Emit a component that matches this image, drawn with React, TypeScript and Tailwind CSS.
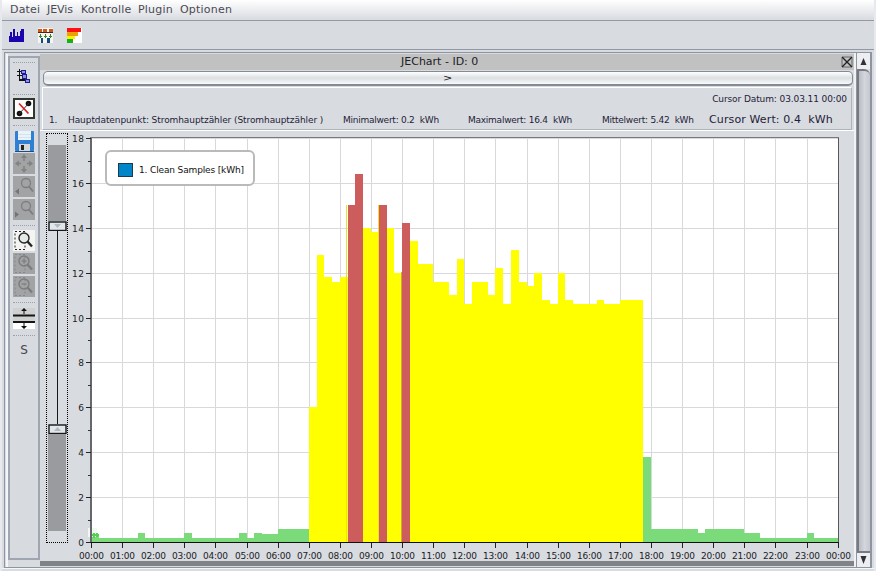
import type { ReactNode } from 'react';

const font = "font-['DejaVu_Sans','Noto_Sans',sans-serif]";

// Quarter-hour consumption values, run-length encoded: [count, kWh, colour]
const GREEN = '#7bdb7b';
const YELLOW = '#ffff00';
const RED = '#cd5c5c';
const runs: [number, number, string][] = [
  [1, 0.35, GREEN], [5, 0.2, GREEN], [1, 0.4, GREEN], [5, 0.2, GREEN], [1, 0.4, GREEN], [6, 0.2, GREEN],
  [1, 0.4, GREEN], [1, 0.2, GREEN], [1, 0.4, GREEN], [2, 0.35, GREEN], [4, 0.6, GREEN],
  [1, 6, YELLOW], [1, 12.8, YELLOW], [1, 11.8, YELLOW], [1, 11.6, YELLOW], [1, 11.8, YELLOW],
  [1, 15, RED], [1, 16.4, RED], [1, 14, YELLOW], [1, 13.8, YELLOW], [1, 15, RED], [1, 14, YELLOW],
  [1, 12, YELLOW], [1, 14.2, RED], [1, 13.4, YELLOW], [2, 12.4, YELLOW], [2, 11.6, YELLOW],
  [1, 11, YELLOW], [1, 12.6, YELLOW], [1, 10.6, YELLOW], [2, 11.6, YELLOW], [1, 11, YELLOW],
  [1, 12.2, YELLOW], [1, 10.6, YELLOW], [1, 13, YELLOW], [1, 11.6, YELLOW], [1, 11.4, YELLOW],
  [1, 12, YELLOW], [1, 10.8, YELLOW], [1, 10.6, YELLOW], [1, 12, YELLOW], [1, 10.8, YELLOW],
  [3, 10.6, YELLOW], [1, 10.8, YELLOW], [2, 10.6, YELLOW], [3, 10.8, YELLOW],
  [1, 3.8, GREEN], [6, 0.6, GREEN], [1, 0.4, GREEN], [5, 0.6, GREEN], [2, 0.4, GREEN],
  [6, 0.2, GREEN], [1, 0.4, GREEN], [3, 0.2, GREEN],
];

const LEFT = 23;
const TOP = 7;
const BOTTOM = 411;
const HOUR = 31.11;
const UNIT = (BOTTOM - TOP) / 18;

function Chart() {
  let slot = 0;
  const bars = runs.map(([n, v, c]) => {
    const x = Math.round(LEFT + (slot * HOUR) / 4);
    slot += n;
    const x2 = Math.round(LEFT + (slot * HOUR) / 4);
    return { x, w: x2 - x, y: Math.round(BOTTOM - v * UNIT), c };
  });
  const hours = Array.from({ length: 25 }, (_, i) => i);
  const steps = Array.from({ length: 10 }, (_, i) => i * 2);
  return (
    <svg width="788" height="430" viewBox="0 0 788 430" className={`block shrink-0 ${font}`} shapeRendering="crispEdges">
      <rect x={LEFT} y={TOP} width="747" height="404" fill="#fff" />
      {hours.map((h) => (
        <rect key={h} x={Math.round(LEFT + h * HOUR)} y={TOP} width="1" height="404" fill="#d8d8dd" />
      ))}
      {steps.map((v) => (
        <rect key={v} x={LEFT} y={Math.round(BOTTOM - v * UNIT)} width="747" height="1" fill="#d8d8dd" />
      ))}
      {bars.map((b, i) => (
        <rect key={i} x={b.x} y={b.y} width={b.w} height={BOTTOM - b.y} fill={b.c} />
      ))}
      <rect x="278" y="74" width="1" height="337" fill="#f0e020" />
      <rect x="310" y="74" width="1" height="337" fill="#f0e020" />
      <rect x="333" y="141" width="1" height="270" fill="#d6a341" />
      <rect x="20" y="397" width="9" height="9" fill="#f0f8f0" />
      <path d="M24 404h7M26 402v5M29 402v4" stroke="#55d055" strokeWidth="1.5" />
      <rect x="22" y={TOP - 1} width="749" height="1" fill="#77797d" />
      <rect x="22" y={TOP} width="2" height="405" fill="#65676b" />
      <rect x="770" y={TOP} width="1" height="405" fill="#55575b" />
      <rect x="22" y={BOTTOM} width="749" height="1" fill="#111" />
      {steps.map((v) => {
        const y = Math.round(BOTTOM - v * UNIT);
        return (
          <g key={v}>
            <rect x="18" y={y} width="5" height="1" fill="#222" />
            {v < 18 && <rect x="20" y={Math.round(y - UNIT)} width="3" height="1" fill="#333" />}
            <text x="16" y={y + 3.5} fontSize="9" textAnchor="end" textLength={v > 9 ? 12 : 6} fill="#1b1b1f">{v}</text>
          </g>
        );
      })}
      {hours.map((h) => {
        const x = Math.round(LEFT + h * HOUR);
        return (
          <g key={h}>
            <rect x={x} y="412" width="1" height="5" fill="#222" />
            <text x={x - 12} y="427.5" fontSize="9" textLength="25" fill="#1b1b1f">
              {`${String(h % 24).padStart(2, '0')}:00`}
            </text>
          </g>
        );
      })}
      <rect x="38" y="20" width="148" height="34" rx="5" fill="#fff" stroke="#bababa" strokeWidth="2" shapeRendering="auto" />
      <rect x="50.5" y="32.5" width="14" height="13" fill="#0085c8" stroke="#1d3b50" />
      <text x="71" y="41.5" fontSize="9" textLength="105" fill="#111">1. Clean Samples [kWh]</text>
    </svg>
  );
}

const Divider = ({ h }: { h: string }) => (
  <div className={`flex w-full shrink-0 items-center px-[3px] ${h}`}>
    <div className="w-full border-t border-dotted border-[#9ba0a9]" />
  </div>
);

function Tool({ children, tone }: { children?: ReactNode; tone: string }) {
  return (
    <div className={`h-[21px] w-[22px] shrink-0 ${tone}`}>
      <svg width="22" height="21" viewBox="0 0 22 21" fill="none">{children}</svg>
    </div>
  );
}

function Lens({ color, sign }: { color: string; sign?: string }) {
  return (
    <g stroke={color}>
      <circle cx="11" cy="8" r="5" strokeWidth="1.4" />
      <path d="M14.5 11.5l4.5 5" strokeWidth="2.4" />
      {sign && <path d={sign} strokeWidth="1.2" />}
    </g>
  );
}

function Sidebar() {
  const gray = 'bg-[#a2a3a5]';
  return (
    <div className="flex h-[504px] w-[32px] shrink-0 flex-col items-center border-2 border-[#a0a6b1] bg-[#d7dadf]">
      <Divider h="h-[8px]" />
      <svg className="mt-[3px] shrink-0" width="14" height="15" viewBox="0 0 14 15" shapeRendering="crispEdges">
        <path d="M2.500 0v11h6M0 2.500h5M0 6.500h7M5.500 4v3" stroke="#111" fill="none" strokeWidth="1.3" />
        <path d="M4.500 1.500h4v3h-4zM5.500 5.500h4v4h-4zM8.500 10.500h4v3h-4z" fill="#8f93dc" stroke="#1c1c90" strokeWidth="1.3" />
      </svg>
      <Divider h="h-[20px]" />
      <div className="-mt-[6px] shrink-0">
        <Tool tone="bg-white">
          <rect x="1" y="1" width="20" height="19" stroke="#33352f" strokeWidth="2" />
          <circle cx="15.500" cy="5.500" r="2.800" fill="#111" />
          <circle cx="6.500" cy="15.500" r="2.800" fill="#111" />
          <path d="M6 16L16 5" stroke="#333" />
          <path d="M6 5.500l9.500 10" stroke="#e02020" strokeWidth="1.800" />
        </Tool>
      </div>
      <Divider h="h-[12px]" />
      <Tool tone="bg-[#d7dadf]">
        <rect x="2" y="0" width="19" height="20" rx="1" fill="#2f80d4" />
        <rect x="5" y="0" width="13" height="9" fill="#eaf2fa" />
        <path d="M5 3.500h13M5 6.500h13" stroke="#d5e3f1" />
        <rect x="6" y="13" width="11" height="7" fill="#d6d6d6" />
        <rect x="8" y="14" width="3" height="5" fill="#222" />
        <path d="M2 20.500h19" stroke="#174e8c" />
      </Tool>
      <div className="mt-px flex shrink-0 flex-col gap-[2px]">
        <Tool tone={gray}>
          <path d="M11 3v5M11 13v5M3 10.500h5M14 10.500h5" stroke="#808284" strokeWidth="1.500" />
          <path d="M11 1l3 4H8zM11 20l3-4H8zM2 10.500l4-3v6zM20 10.500l-4-3v6z" fill="#808284" />
        </Tool>
        <Tool tone={gray}>
          <circle cx="13" cy="7" r="4.500" stroke="#7c7e80" strokeWidth="1.300" />
          <path d="M16 10.500l4 5" stroke="#7c7e80" strokeWidth="2" />
          <path d="M2 15.500l4-3v6z" fill="#727476" />
        </Tool>
        <Tool tone={gray}>
          <circle cx="13" cy="7" r="4.500" stroke="#7c7e80" strokeWidth="1.300" />
          <path d="M16 10.500l4 5" stroke="#7c7e80" strokeWidth="2" />
          <path d="M6 15.500l-4-3v6z" fill="#727476" />
        </Tool>
      </div>
      <Divider h="h-[10px]" />
      <div className="flex shrink-0 flex-col gap-[2px]">
        <Tool tone="bg-[#f4f4f2]">
          <path d="M2 1.500h10v18H2z" stroke="#222" strokeDasharray="2 2" />
          <circle cx="10.500" cy="8.500" r="4.800" fill="#e5e9e8" />
          <Lens color="#252825" />
        </Tool>
        <Tool tone={gray}>
          <path d="M2 1.500h10v18H2z" stroke="#858789" strokeDasharray="2 2" />
          <Lens color="#7a7c7e" sign="M8.500 8h5M11 5.500v5" />
        </Tool>
        <Tool tone={gray}>
          <path d="M2 1.500h10v18H2z" stroke="#858789" strokeDasharray="2 2" />
          <Lens color="#7a7c7e" sign="M8.500 8h5" />
        </Tool>
      </div>
      <Divider h="h-[11px]" />
      <Tool tone="bg-[#cfd0d0]">
        <rect y="15" width="22" height="6" fill="#fff" />
        <path d="M0 7.500h22M0 14h22" stroke="#151515" strokeWidth="2" />
        <path d="M11 1v5M11 15v5" stroke="#111" />
        <path d="M11 0l3 3H8zM11 21l3-3H8z" fill="#111" />
      </Tool>
      <Divider h="h-[12px]" />
      <div className="mt-px text-[12px] leading-[16px] text-[#45474f]">S</div>
    </div>
  );
}

const Handle = ({ up }: { up: boolean }) => (
  <svg className="block shrink-0" width="19" height="10" viewBox="0 0 19 10">
    <rect x="1" y="1" width="17" height="8.500" fill="#e3e6e9" stroke="#15171a" strokeWidth="1.400" />
    <path d={up ? 'M9.500 3l3.500 4H6z' : 'M9.500 7L6 3h7z'} fill="#aeb9c5" />
  </svg>
);

function RangeSlider() {
  return (
    <div className="mt-[2px] flex h-[410px] w-[22px] shrink-0 flex-col items-center border border-dotted border-black">
      <div className="mt-[11px] h-[76px] w-[18px] shrink-0 bg-[#999b9f]" />
      <Handle up={false} />
      <div className="h-[193px] w-px shrink-0 bg-[#16181b]" />
      <Handle up />
      <div className="h-[97px] w-[18px] shrink-0 bg-[#999b9f]" />
    </div>
  );
}

function InfoPanel() {
  return (
    <div className="ml-[2px] mr-[2px] mt-px flex h-[43px] shrink-0 flex-col border border-[#aeb3bc] border-l-white border-t-white text-[9px] leading-[12px] text-[#251c38]">
      <div className="mr-[4px] mt-[5px] self-end whitespace-pre tracking-[-0.1px]">Cursor Datum: 03.03.11 00:00</div>
      <div className="ml-[6px] mt-[9px] flex items-center whitespace-pre tracking-[-0.25px]">
        <span className="w-[19px] shrink-0">1.</span>
        <span className="w-[275px] shrink-0 tracking-[-0.08px]">Hauptdatenpunkt: Stromhauptzähler (Stromhauptzähler )</span>
        <span className="w-[125px] shrink-0">Minimalwert: 0.2  kWh</span>
        <span className="w-[134px] shrink-0">Maximalwert: 16.4  kWh</span>
        <span className="w-[107px] shrink-0">Mittelwert: 5.42  kWh</span>
        <span className="shrink-0 text-[11px] leading-[12px] tracking-[0.12px]">Cursor Wert: 0.4  kWh</span>
      </div>
    </div>
  );
}

function Scrollbar() {
  return (
    <div className="flex h-[514px] w-[15px] shrink-0 flex-col border-x border-[#8f95a0] bg-[#d9dce1]">
      <div className="flex h-[16px] shrink-0 items-center justify-center bg-[#eceef1]">
        <svg width="7" height="7" viewBox="0 0 7 7"><path d="M3.500 0L6.500 7h-6z" fill="#303237" /></svg>
      </div>
      <div className="flex-1 rounded-tr-[6px] border-l-2 border-t-2 border-[#777a80] bg-linear-to-r from-[#b9bcc3] via-[#d3d6dc] to-[#c4c7cd]" />
      <div className="flex h-[16px] shrink-0 items-center justify-center border-t-2 border-[#777a80] bg-[#eceef1]">
        <svg width="7" height="8" viewBox="0 0 7 8"><path d="M0.500 0h6L3.500 8z" fill="#303237" /></svg>
      </div>
    </div>
  );
}

export default function App() {
  return (
    <div className={`flex h-[571px] w-[876px] flex-col overflow-hidden border-l-2 border-r-2 border-[#e7e9ef] bg-[#d8dbe0] ${font}`}>
      <div className="flex h-[21px] shrink-0 items-center border-b border-[#949aa5] bg-linear-to-b from-white to-[#d9dbe0] pl-[8px] text-[11px] leading-[18px] tracking-[0.2px] text-[#4a4a52]">
        <span className="w-[37px]">Datei</span>
        <span className="w-[34px] tracking-[-0.1px]">JEVis</span>
        <span className="w-[57px]">Kontrolle</span>
        <span className="w-[42px]">Plugin</span>
        <span>Optionen</span>
      </div>
      <div className="flex h-[29px] shrink-0 items-center gap-[14px] border-b border-[#9399a4] pl-[7px]">
        <svg width="15" height="15" viewBox="0 0 15 15" shapeRendering="crispEdges">
          <path d="M0 14V8h1V4h2v5h1V1h2v7h2V4h1v4h2V3h1V1h3v13z" fill="#1b03b0" />
        </svg>
        <svg width="15" height="15" viewBox="0 0 15 15" shapeRendering="crispEdges">
          <rect width="15" height="15" fill="#f6f4ef" />
          <path d="M0 1h4v3H0zM5 1h4v3H5zM11 1h4v3h-4z" fill="#c85a1e" />
          <path d="M0 4.500h15" stroke="#4e2518" />
          <path d="M1 8h3M6 8h3M11 8h3M2.500 6v4M7.500 6v4M12.500 6v4" stroke="#35852f" />
          <path d="M3 10h2v5H3zM9 10h3v5H9z" fill="#174b80" />
        </svg>
        <svg width="15" height="15" viewBox="0 0 15 15" shapeRendering="crispEdges">
          <rect width="15" height="15" fill="#fff" />
          <path d="M0 0h14v4H0z" fill="#fb1111" />
          <path d="M0 4h11v4H0z" fill="#e9a207" />
          <path d="M0 8h8v3H0z" fill="#fff000" />
          <path d="M0 11h6v4H0z" fill="#14b414" />
        </svg>
      </div>
      <div className="mx-[2px] mt-[2px] flex h-[516px] shrink-0 border border-[#8f95a0] bg-[#d8dbe0]">
        <div className="ml-px mt-px h-[513px] w-[2px] shrink-0 bg-[#f4f5f7]" />
        <div className="mt-[3px] shrink-0"><Sidebar /></div>
        <div className="flex w-[816px] shrink-0 flex-col border-r-2 border-[#f1f2f4]">
          <div className="mt-px flex h-[16px] shrink-0 items-center bg-[#c1c1c1]">
            <div className="flex-1 pl-[361px] text-[11px] leading-[14px] text-[#202024]">JEChart - ID: 0</div>
            <svg className="mr-px" width="12" height="12" viewBox="0 0 12 12" fill="none" stroke="#222">
              <rect x="1" y="1" width="10" height="10" rx="1" stroke="#66686c" />
              <path d="M1 1l10 10M11 1L1 11" strokeWidth="1.400" />
            </svg>
          </div>
          <div className="ml-[3px] mr-px mt-px flex h-[15px] shrink-0 items-center justify-center rounded-[5px] border border-b-2 border-[#858b95] bg-linear-to-b from-white via-[#dcdfe3] to-[#f8f9fa] text-[9px] leading-[10px] text-[#111]">
            <span className="scale-x-125">&gt;</span>
          </div>
          <InfoPanel />
          <div className="flex h-[431px] shrink-0 border-t border-white pl-[6px]">
            <RangeSlider />
            <Chart />
          </div>
          <div className="h-[5px] w-full shrink-0 bg-[#818486]" />
        </div>
        <Scrollbar />
      </div>
      <div className="h-px shrink-0 bg-[#f6f7f9]" />
    </div>
  );
}
